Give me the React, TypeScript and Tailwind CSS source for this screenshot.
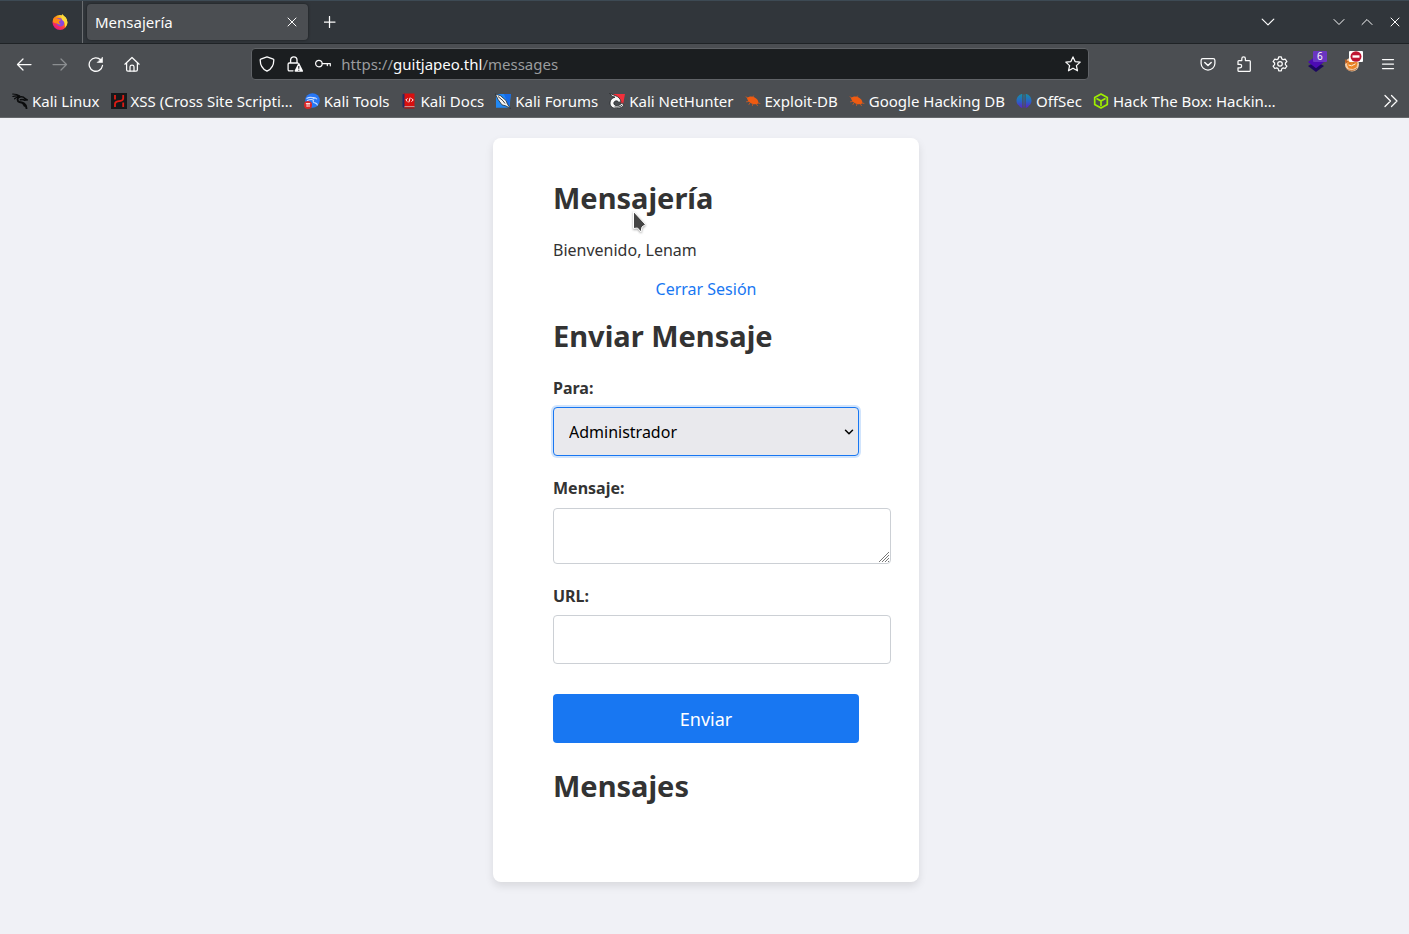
import React from "react";

type IconProps = { className?: string };

const stroke = {
  fill: "none",
  stroke: "currentColor",
  strokeLinecap: "round" as const,
  strokeLinejoin: "round" as const,
};

function FirefoxIcon() {
  return (
    <svg className="size-4" viewBox="0 0 16 16" aria-hidden="true">
      <defs>
        <linearGradient id="fx-body" x1="0.85" y1="0.1" x2="0.2" y2="0.95">
          <stop offset="0" stopColor="#fff44f" />
          <stop offset="0.35" stopColor="#ff980e" />
          <stop offset="0.65" stopColor="#ff3647" />
          <stop offset="1" stopColor="#e31587" />
        </linearGradient>
      </defs>
      <circle cx="8" cy="8.400" r="7.500" fill="url(#fx-body)" />
      <path d="M8.6 4.2a4.1 4.1 0 1 1-4.4 4.4c0-1 .3-2 1-2.700l-.4-2z" fill="#8a45e0" />
      <path d="M10.300 0c.6 1.200 2 2 3 3.300 2.600 3 2.800 7-.3 10.200.4-3.600-.5-6-2.600-7.300C9.100 5 9 2.500 10.300 0z" fill="#ffd93b" />
      <path d="M.7 7.500C.8 5 1.700 3.800 2.600 2.900c0 .7.2 1.200.5 1.500C4.500 4 6 4.300 7 5.300c.8.2 1.600.2 2 .5-.2 1-1.500 1-2 1.700-.2 1.500.8 2.300 2 2.300-1 .9-2.700.9-3.800-.2C3.500 9 1.700 9 .7 7.500z" fill="#ff8a16" />
    </svg>
  );
}

function CloseIcon({ className }: IconProps) {
  return (
    <svg className={className} viewBox="0 0 10 10" {...stroke} aria-hidden="true">
      <path d="M1 1l8 8M9 1L1 9" />
    </svg>
  );
}

function ChevronIcon({ className }: IconProps) {
  return (
    <svg className={className} viewBox="0 0 12 12" {...stroke} aria-hidden="true">
      <path d="M1 3.500l5 5 5-5" />
    </svg>
  );
}

function BackIcon() {
  return (
    <svg className="size-4" viewBox="0 0 16 16" {...stroke} strokeWidth="1.25" aria-hidden="true">
      <path d="M15 8.500H1.500M7 3L1.500 8.500 7 14" />
    </svg>
  );
}

function ForwardIcon() {
  return (
    <svg className="size-4" viewBox="0 0 16 16" {...stroke} strokeWidth="1.25" aria-hidden="true">
      <path d="M1 8.500h13.500M9 3l5.500 5.500L9 14" />
    </svg>
  );
}

function ReloadIcon() {
  return (
    <svg className="size-4" viewBox="0 0 16 16" {...stroke} strokeWidth="1.300" aria-hidden="true">
      <path d="M14.500 9.500A6.700 6.700 0 1 1 12.800 4" />
      <path d="M14.500 1.500v5h-5z" fill="currentColor" strokeWidth=".6" />
    </svg>
  );
}

function HomeIcon() {
  return (
    <svg className="size-4" viewBox="0 0 16 16" {...stroke} strokeWidth="1.250" aria-hidden="true">
      <path d="M.9 8.200L8 1.500l7.100 6.700M2.600 7v6.800c0 .8.500 1.300 1.300 1.300h8.200c.8 0 1.300-.5 1.300-1.300V7" />
      <path d="M6 15v-4.300c0-.9.9-1.600 2-1.600s2 .7 2 1.600V15" />
    </svg>
  );
}

function ShieldIcon() {
  return (
    <svg className="size-4" viewBox="0 0 16 16" {...stroke} strokeWidth="1.300" aria-hidden="true">
      <path d="M8 .9l6.300 2.300c.3.100.5.400.5.700 0 4.500-1.500 8.700-6.800 11.300C2.700 12.600 1.200 8.400 1.200 3.900c0-.3.2-.6.500-.7z" />
    </svg>
  );
}

function LockWarningIcon() {
  return (
    <svg className="size-4" viewBox="0 0 16 16" aria-hidden="true">
      <path d="M3.600 7V4a3.200 3.200 0 0 1 6.400 0v3M6 14.800H2.300c-.7 0-1.200-.5-1.200-1.200V8.200C1.100 7.500 1.600 7 2.300 7h8.500" {...stroke} strokeWidth="1.300" />
      <path d="M11.200 7.400c.3-.6.9-.6 1.200 0l3.500 7.200c.3.600 0 1.200-.6 1.200H8.300c-.6 0-.9-.6-.6-1.200z" fill="currentColor" />
      <path d="M11.800 10v2.700M11.800 13.800v1" stroke="#1b1e20" strokeWidth="1.100" />
    </svg>
  );
}

function KeyIcon() {
  return (
    <svg className="size-4" viewBox="0 0 16 16" {...stroke} strokeWidth="1.200" aria-hidden="true">
      <circle cx="3.900" cy="7.600" r="3.300" />
      <path d="M7.200 7.600h8.100v2.200M12.300 7.600v2" />
    </svg>
  );
}

function StarIcon() {
  return (
    <svg className="size-4" viewBox="0 0 16 16" {...stroke} strokeWidth="1.250" aria-hidden="true">
      <path d="M8 .9l2.100 4.700 5.100.5-3.800 3.500 1.100 5.200L8 12.200l-4.500 2.600 1.100-5.200L.8 6.100l5.100-.5z" />
    </svg>
  );
}

function PocketIcon() {
  return (
    <svg className="size-4" viewBox="0 0 16 16" {...stroke} strokeWidth="1.250" aria-hidden="true">
      <path d="M2.900 2.700h10.200c1 0 1.800.8 1.800 1.700v3A6.900 6.900 0 0 1 8 14.100 6.900 6.900 0 0 1 1.100 7.400v-3c0-.9.8-1.700 1.800-1.700z" />
      <path d="M4.800 6.500L8 9.500l3.200-3" strokeWidth="1.500" />
    </svg>
  );
}

function ExtensionsIcon() {
  return (
    <svg className="size-4" viewBox="0 0 16 16" {...stroke} strokeWidth="1.250" aria-hidden="true">
      <path d="M2 7.300V5.500c0-.5.400-.9.900-.9h2.900V2.700a1.800 1.800 0 0 1 3.600 0v1.900h4c.5 0 .9.400.9.900v9c0 .5-.4.900-.9.900H2.900c-.5 0-.9-.4-.9-.9v-2.700h2a1.700 1.700 0 0 0 0-3.400H2z" />
    </svg>
  );
}

function GearIcon() {
  return (
    <svg className="size-4" viewBox="0 0 16 16" {...stroke} strokeWidth="1.250" aria-hidden="true">
      <path d="M6.700.9h2.600l.5 2 1.400.8 2-.6 1.700 2.400-1.500 1.500v1.600l1.500 1.500-1.700 2.400-2-.6-1.400.8-.5 2.100H6.700l-.5-2.100-1.400-.8-2 .6-1.700-2.400 1.500-1.500V7L1.100 5.500l1.700-2.400 2 .6 1.400-.8z" />
      <circle cx="8" cy="7.800" r="2.300" />
    </svg>
  );
}

function LayersIcon() {
  return (
    <svg className="size-4" viewBox="0 0 16 16" aria-hidden="true">
      <path d="M0 10l8-4.500L16 10l-8 6z" fill="#1c0760" />
      <path d="M0 6l8-6 8 6-8 6.200z" fill="#4c0bb4" />
    </svg>
  );
}

function FoxyIcon() {
  return (
    <svg className="size-4" viewBox="0 0 16 16" aria-hidden="true">
      <circle cx="8" cy="8.500" r="7" fill="#f3cba6" />
      <path d="M3.500 4.500l3.500 1.200 5-.1 1.500 1.500-1 4.200-3.500 1.600-4.300-.5L3 9z" fill="#ed8527" />
      <path d="M4.500 9l3 .8 4-2" stroke="#fff0d8" strokeWidth="1" fill="none" />
      <path d="M.8 3l3.500 2.500L1.500 8z" fill="#b95d20" />
      <path d="M5 7.300h1.500M8.800 7.200h1.400M2 12.500c3 2.500 8 2.800 11-.2" stroke="#a5602c" strokeWidth=".8" fill="none" />
    </svg>
  );
}

function NoEntryIcon() {
  return (
    <svg className="h-[11px] w-3" viewBox="0 0 12 11" aria-hidden="true">
      <ellipse cx="6" cy="5.500" rx="5.500" ry="5.200" fill="#be1432" />
      <path d="M2.500 4.300h7v2.400h-7z" fill="#fff" />
    </svg>
  );
}

function MenuIcon() {
  return (
    <svg className="size-4" viewBox="0 0 16 16" {...stroke} strokeWidth="1.250" aria-hidden="true">
      <path d="M2.500 3.500h11M2.500 8h11M2.500 12.500h11" />
    </svg>
  );
}

function KaliDragonIcon() {
  return (
    <svg className="size-4" viewBox="0 0 16 16" fill="none" stroke="#0b0c0d" strokeLinecap="round" aria-hidden="true">
      <path d="M.7 1c3 .1 4.800.300 7 2M.9 3.500C3.500 2.600 5.500 2.600 7.500 3.600M2.600 5.800C4 4.500 5.500 4 7.500 4.300" strokeWidth="1.200" />
      <path d="M7.500 3.600C4.900 5 4.800 8.200 7.500 9c3.500.8 6.600 1.500 7 6.300" strokeWidth="1.900" />
      <path d="M7.500 4c2.300-.6 4.200-.2 5.300 1.500l2.400 1.400-2.800.3c-1.200-1-2.300-.9-4-.5M11 10.500l1.500 2.500" strokeWidth="1.500" />
    </svg>
  );
}

function XssIcon() {
  return (
    <svg className="size-4" viewBox="0 0 16 16" aria-hidden="true">
      <path d="M0 0h16v16H0z" fill="#16191b" />
      <path d="M4 2v4.500M12.200 2v3.200c0 1.700-1 2.400-2.600 2.700l-3 .5C5 8.700 4 9.500 4 11.200V14M12.200 9.500V14" fill="none" stroke="#dc1c14" strokeWidth="1.800" />
    </svg>
  );
}

function KaliToolsIcon() {
  return (
    <svg className="size-4" viewBox="0 0 16 16" aria-hidden="true">
      <circle cx="8.500" cy="7.500" r="7.300" fill="#2777f7" />
      <path d="M2.500 5.500c3-1.600 6-1.300 8 .2M3 7.800c3-1.600 5-1.500 6.500-.6-.8 1.300-.2 2.500 1.500 2.700 1.500.2 2.300 1 2.500 2.500M8.500 4.500c2.200-.3 3.500.3 4.500 1.700" fill="none" stroke="#c8ddff" strokeWidth="1.100" />
      <circle cx="4" cy="12" r="4" fill="#dc2626" />
      <path d="M1.900 10.600h4.300M3.100 10.600V14M5 10.600V14" stroke="#fff" strokeWidth=".9" />
    </svg>
  );
}

function KaliDocsIcon() {
  return (
    <svg className="size-4" viewBox="0 0 16 16" aria-hidden="true">
      <path d="M2 .5h11.500v13H2z" fill="#d90f0f" />
      <path d="M1.500 1.500L3.500.5v14.800l-2-1.300z" fill="#232b63" />
      <path d="M3.500 13.300h10v1h-10z" fill="#e6b7b7" />
      <path d="M3.500 14.300h10v1.200h-10z" fill="#b50909" />
      <path d="M6.500 5.300L4.800 7l1.700 1.700M10.500 5.300L12.200 7l-1.700 1.700M9.200 4.600L7.800 9.400" fill="none" stroke="#fff" strokeWidth="1" />
    </svg>
  );
}

function KaliForumsIcon() {
  return (
    <svg className="size-4" viewBox="0 0 16 16" aria-hidden="true">
      <path d="M1 1h14.800l-1.300 13.800H1z" fill="#2088f5" />
      <path d="M9 1h6.800l-1.800 13z" fill="#176ae7" />
      <path d="M.3 1l5.200 1.700L11 7.500l1.500 3.700 3 4.300-4.800-2.700-3.700-.9-3.800-5.200z" fill="#f4f5f6" stroke="#25292d" strokeWidth=".8" />
      <path d="M3 3.500l5 4.300 2 2.700" stroke="#2a2d30" strokeWidth=".9" fill="none" />
    </svg>
  );
}

function NetHunterIcon() {
  return (
    <svg className="size-4" viewBox="0 0 16 16" aria-hidden="true">
      <path d="M3.500 1H16l-2 11z" fill="#f2303b" />
      <path d="M.5.300L3 3.200l3 1C3 4.800 1 7 1 10c0 3.500 3 5.500 6.500 5.500 3.500 0 6.500-1.500 7.500-3.500l-2-2.300c-1.500 2.300-4 3.300-6 2.900-2.300-.5-2.800-2.800-1.400-4.100 1.300-1.100 3-.7 4.100.7l2.300-.3C11.700 6 9.500 3.600 6 2.500z" fill="#f8f8f8" stroke="#202326" strokeWidth=".8" />
      <path d="M5.500 14c3.500.7 6-.2 8-2.200" fill="none" stroke="#202326" strokeWidth=".9" />
    </svg>
  );
}

function ExploitIcon() {
  return (
    <svg className="size-4" viewBox="0 0 16 16" fill="none" stroke="#ef5b12" strokeLinecap="round" aria-hidden="true">
      <path d="M2 5c1.800-1.800 4.800-2 7.300-.8 2.700 1.300 4.500 3.600 4 6.200-2.500 1.300-5.500 1-8-.7C3.500 8.500 2.400 7 2 5z" fill="#ef5b12" stroke="none" />
      <path d="M1 3.800l2 1.500M3.500 8.500l-2 .3M5 9.800l-1 1.700M8 10.500l-.5 2M11 10.500l1.500 2.200M12.800 9.800l2.200.7M7.500 4l1.300-1" strokeWidth=".7" />
    </svg>
  );
}

function OffSecIcon() {
  return (
    <svg className="size-4" viewBox="0 0 16 16" aria-hidden="true">
      <defs>
        <linearGradient id="offsec" x1="0" y1="0" x2="0" y2="1">
          <stop offset="0" stopColor="#168fa8" />
          <stop offset="0.5" stopColor="#2666c4" />
          <stop offset="1" stopColor="#5b21c9" />
        </linearGradient>
      </defs>
      <path d="M6.300 1v14C4 14.300 3.300 13 3 12.500-.3 10.500-.3 5 3 2.500 4 1.500 5 1 6.300 1zM7.500 1.500h1v13h-1zM9.700 1c1.300 0 2.300.5 3.300 1.500 3.300 2.500 3.300 8 0 10-.3.500-1 1.800-3.300 2.500z" fill="url(#offsec)" />
    </svg>
  );
}

function HackTheBoxIcon() {
  return (
    <svg className="size-4" viewBox="0 0 16 16" fill="none" stroke="#9fef00" strokeWidth="1.700" strokeLinejoin="round" aria-hidden="true">
      <path d="M8 1l6.300 3.500v7L8 15l-6.300-3.500v-7z" />
      <path d="M4 5.800L8 8l4-2.200M8 8v4.500" strokeLinecap="round" />
    </svg>
  );
}

function ToolButton({ label, dim, children }: { label: string; dim?: boolean; children: React.ReactNode }) {
  return (
    <button
      type="button"
      aria-label={label}
      disabled={dim}
      className="relative flex h-8 w-9 shrink-0 items-center justify-center text-[#fcfcfc] disabled:text-[#8b8e91]"
    >
      {children}
    </button>
  );
}

function TabStrip() {
  return (
    <div className="flex h-11 items-center border-t border-b border-t-[#3d4a54] border-b-[#1f2326] bg-[#31363b] text-[#fcfcfc]">
      <div className="flex h-full w-[83px] shrink-0 items-center justify-end border-r border-[#6b6e71] pr-[14px]">
        <button type="button" aria-label="Firefox">
          <FirefoxIcon />
        </button>
      </div>
      <div className="ml-1 flex h-9 w-[221px] shrink-0 items-center justify-between rounded-[4px] bg-[#4b4e52] pr-[11px] pl-2 shadow-[0_0_3px_rgba(0,0,0,0.5)]">
        <span className="text-[15px]">Mensajería</span>
        <button type="button" aria-label="Cerrar pestaña">
          <CloseIcon className="size-[10px]" />
        </button>
      </div>
      <button type="button" aria-label="Nueva pestaña" className="ml-2 flex size-7 items-center justify-center">
        <svg className="size-3" viewBox="0 0 12 12" {...stroke} strokeWidth="1.250" aria-hidden="true">
          <path d="M5.500 .5v11M0 6h11" />
        </svg>
      </button>
      <button type="button" aria-label="Listar pestañas" className="mr-[43px] ml-auto flex size-7 items-center justify-center">
        <ChevronIcon className="size-[14px]" />
      </button>
      <button type="button" aria-label="Minimizar" className="flex size-7 items-center justify-center">
        <ChevronIcon className="size-3" />
      </button>
      <button type="button" aria-label="Maximizar" className="flex size-7 items-center justify-center">
        <ChevronIcon className="size-3 rotate-180" />
      </button>
      <button type="button" aria-label="Cerrar" className="flex size-7 items-center justify-center">
        <CloseIcon className="size-[10px]" />
      </button>
    </div>
  );
}

function NavBar() {
  return (
    <div className="flex h-10 items-center pr-[3px] pl-[6px]">
      <ToolButton label="Atrás"><BackIcon /></ToolButton>
      <ToolButton label="Adelante" dim><ForwardIcon /></ToolButton>
      <ToolButton label="Recargar"><ReloadIcon /></ToolButton>
      <ToolButton label="Inicio"><HomeIcon /></ToolButton>
      <div className="flex-[103]" />
      <div className="flex h-8 flex-[835] items-center rounded-[4px] border border-[#606367] bg-[#1b1e20] px-[7px] text-[#fcfcfc]">
        <button type="button" aria-label="Protección"><ShieldIcon /></button>
        <button type="button" aria-label="Seguridad del sitio" className="ml-3"><LockWarningIcon /></button>
        <button type="button" aria-label="Contraseñas" className="ml-3"><KeyIcon /></button>
        <div className="ml-[10px] flex-1 text-[15px] whitespace-nowrap text-[#9a9c9e]">
          https://<span className="text-[#fcfcfc]">guitjapeo.thl</span>/messages
        </div>
        <button type="button" aria-label="Añadir marcador"><StarIcon /></button>
      </div>
      <div className="flex-[103]" />
      <ToolButton label="Pocket"><PocketIcon /></ToolButton>
      <ToolButton label="Extensiones"><ExtensionsIcon /></ToolButton>
      <ToolButton label="Ajustes"><GearIcon /></ToolButton>
      <ToolButton label="Wappalyzer">
        <LayersIcon />
        <span className="absolute top-[3px] right-[7px] flex h-[11px] w-[14px] items-center justify-center rounded-[1px] bg-[#6a35c2] text-[10px]">6</span>
      </ToolButton>
      <ToolButton label="FoxyProxy">
        <FoxyIcon />
        <span className="absolute top-[3px] right-[7px] flex h-[11px] w-[14px] items-center justify-center rounded-[1px] bg-white">
          <NoEntryIcon />
        </span>
      </ToolButton>
      <ToolButton label="Menú"><MenuIcon /></ToolButton>
    </div>
  );
}

const bookmarks = [
  { label: "Kali Linux", icon: <KaliDragonIcon /> },
  { label: "XSS (Cross Site Scripti…", icon: <XssIcon /> },
  { label: "Kali Tools", icon: <KaliToolsIcon /> },
  { label: "Kali Docs", icon: <KaliDocsIcon /> },
  { label: "Kali Forums", icon: <KaliForumsIcon /> },
  { label: "Kali NetHunter", icon: <NetHunterIcon /> },
  { label: "Exploit-DB", icon: <ExploitIcon /> },
  { label: "Google Hacking DB", icon: <ExploitIcon /> },
  { label: "OffSec", icon: <OffSecIcon /> },
  { label: "Hack The Box: Hackin…", icon: <HackTheBoxIcon /> },
];

function BookmarksBar() {
  return (
    <nav className="flex h-[34px] items-center gap-[11px] border-b border-[#65686b] pr-[10px] pl-3 text-[15px] leading-5 whitespace-nowrap text-[#fcfcfc]">
      {bookmarks.map((b) => (
        <a key={b.label} href="#" className="flex shrink-0 items-center gap-1">
          {b.icon}
          <span>{b.label}</span>
        </a>
      ))}
      <button type="button" aria-label="Más marcadores" className="ml-auto">
        <svg className="size-4" viewBox="0 0 16 16" {...stroke} strokeWidth="1.250" aria-hidden="true">
          <path d="M2 2.500L7.500 8 2 13.500M8.500 2.500L14 8l-5.500 5.500" />
        </svg>
      </button>
    </nav>
  );
}

function Pointer() {
  return (
    <svg className="absolute top-8 left-[78px] h-[24px] w-[17px] drop-shadow-[0_1px_1px_rgba(0,0,0,0.35)]" viewBox="0 0 17 24" aria-hidden="true">
      <path d="M2.500 1.500v17l4-.5 3.500 4 1-5 3.500-2.500z" fill="#444" stroke="#fff" strokeWidth="1" />
    </svg>
  );
}

const heading = "text-[29px] leading-10 font-bold";
const label = "leading-6 font-bold";
const box = "rounded-[4px] border border-[#ccd0d5] bg-white px-[15px] text-base text-black outline-none";

function MessagesPage() {
  return (
    <main className="flex flex-1 items-start justify-center bg-[#f0f1f6] py-5 pl-[3px] text-base text-[#333]">
      <div className="w-full max-w-[426px] rounded-lg bg-white px-[60px] pt-10 pb-[76px] shadow-[0_4px_8px_rgba(0,0,0,0.1)]">
        <h1 className={`relative ${heading}`}>
          Mensajería
          <Pointer />
        </h1>
        <p className="mt-5 leading-6">Bienvenido, Lenam</p>
        <a href="#" className="mt-[15px] block text-center leading-6 text-[#1877f2]">Cerrar Sesión</a>

        <h2 className={`mt-[15px] ${heading}`}>Enviar Mensaje</h2>
        <form className="mt-5 flex flex-col gap-5" onSubmit={(e) => e.preventDefault()}>
          <div className="flex flex-col gap-[7px]">
            <label htmlFor="to" className={label}>Para:</label>
            <div className="relative">
              <select
                id="to"
                className="block h-[49px] w-full appearance-none rounded-[4px] border border-[#1877f2] bg-[#e9e9ed] px-[15px] text-base text-black shadow-[0_0_0_2px_rgba(24,119,242,0.2)] outline-none"
              >
                <option>Administrador</option>
              </select>
              <svg className="pointer-events-none absolute top-5 right-[5px] size-[10px] text-black" viewBox="0 0 10 10" {...stroke} strokeWidth="1.500" aria-hidden="true">
                <path d="M1.500 3.200L5 6.700l3.500-3.500" />
              </svg>
            </div>
          </div>
          <div className="flex flex-col gap-2">
            <label htmlFor="message" className={label}>Mensaje:</label>
            <div className="relative -mr-8">
              <textarea id="message" className={`block h-14 w-full resize-none py-[15px] ${box}`} />
              <svg className="pointer-events-none absolute right-[2px] bottom-[2px] size-[10px]" viewBox="0 0 10 10" fill="none" stroke="#777" aria-hidden="true">
                <path d="M0 10L10 0M3 10l7-7M6 10l4-4M9 10l1-1" />
              </svg>
            </div>
          </div>
          <div className="flex flex-col gap-[7px]">
            <label htmlFor="url" className={label}>URL:</label>
            <div className="-mr-8">
              <input id="url" type="text" className={`block h-[49px] w-full ${box}`} />
            </div>
          </div>
          <button type="submit" className="mt-[10px] h-[49px] rounded-[4px] bg-[#1877f2] text-lg leading-6 text-white">Enviar</button>
        </form>

        <h2 className={`mt-[23px] ${heading}`}>Mensajes</h2>
      </div>
    </main>
  );
}

export default function App() {
  return (
    <div className="flex min-h-screen flex-col overflow-x-hidden font-['Noto_Sans',sans-serif]">
      <header className="bg-[#4b4e52]">
        <TabStrip />
        <NavBar />
        <BookmarksBar />
      </header>
      <MessagesPage />
    </div>
  );
}
